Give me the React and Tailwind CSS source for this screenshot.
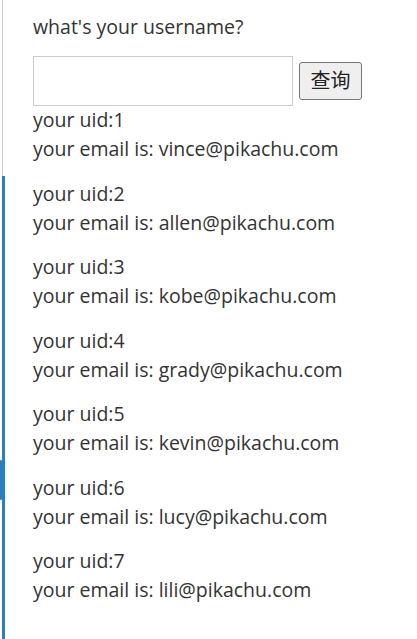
const users = [
  { id: 1, email: "vince@pikachu.com" },
  { id: 2, email: "allen@pikachu.com" },
  { id: 3, email: "kobe@pikachu.com" },
  { id: 4, email: "grady@pikachu.com" },
  { id: 5, email: "kevin@pikachu.com" },
  { id: 6, email: "lucy@pikachu.com" },
  { id: 7, email: "lili@pikachu.com" },
];

export default function App() {
  return (
    <div className="relative flex min-h-[639px] w-[417px] overflow-hidden bg-white font-['Open_Sans','Noto_Sans_CJK_SC',sans-serif] text-[19.5px] text-[#333]">
      {/* left rail */}
      <div className="ml-[2px] flex w-[3px] flex-col">
        <div className="h-[176px] w-px bg-[#d0d0d0]" />
        <div className="flex-1 bg-[#2a7fc1]" />
      </div>
      <div className="absolute left-0 top-[460px] h-[40px] w-[3px] rounded-r bg-[#2a7fc1]" />

      <div className="flex-1 pl-[28px] pt-[14px]">
        <p className="leading-[26px]">what's your username?</p>
        <form className="mt-[16px] flex items-center gap-[6px]">
          <input
            type="text"
            className="h-[50px] w-[260px] border border-[#ccc] px-2 outline-none"
          />
          <button
            type="button"
            className="h-[38px] w-[63px] rounded-[3px] border border-[#767676] bg-[#efefef] text-[20px] text-[#222]"
          >
            查询
          </button>
        </form>
        <div className="-mt-[1px]">
          {users.map((u) => (
            <div key={u.id} className="mb-[15.5px] leading-[29px]">
              <p>your uid:{u.id}</p>
              <p>your email is: {u.email}</p>
            </div>
          ))}
        </div>
      </div>
    </div>
  );
}
